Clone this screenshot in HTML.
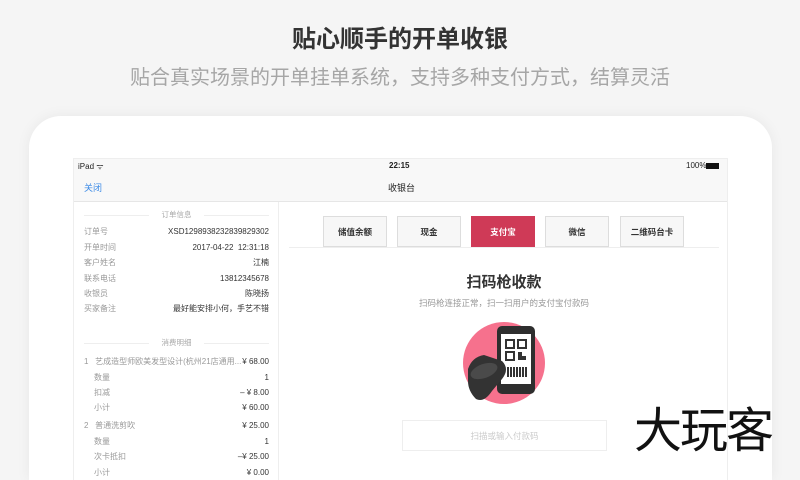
<!DOCTYPE html>
<html><head><meta charset="utf-8"><style>
*{margin:0;padding:0;box-sizing:border-box}
html,body{width:800px;height:480px;overflow:hidden}
body{background:#f5f5f5;font-family:"Liberation Sans","Noto Sans CJK SC",sans-serif;position:relative}
.t1{position:absolute;top:26px;left:0;width:800px;text-align:center;font-size:24px;font-weight:bold;color:#333;line-height:28px}
.t2{position:absolute;top:66px;left:0;width:800px;text-align:center;font-size:20px;color:#a6a6a6;line-height:24px}
.card{position:absolute;left:29px;top:116px;width:743px;height:364px;background:#fff;border-radius:32px 32px 0 0;box-shadow:0 0 14px rgba(0,0,0,0.06)}
.scr{position:absolute;left:73px;top:158px;width:655px;height:322px;background:#fff;border:1px solid #eee;border-bottom:none;overflow:hidden}
.sb{position:absolute;left:0;top:0;width:100%;height:43px;background:#f8f8f8;border-bottom:1px solid #e6e6e6;font-size:8px;color:#222}
.abs{position:absolute}
.left{position:absolute;left:0;top:43px;width:205px;height:300px;border-right:1px solid #eee;font-size:8px;color:#999}
.row{position:absolute;left:10px;width:185px;height:12px;line-height:12px}
.row .v{position:absolute;right:0;top:0;color:#333}
.sec{position:absolute;left:10px;width:185px;text-align:center;font-size:7.5px;color:#aaa;line-height:10px}
.sec:before,.sec:after{content:"";position:absolute;top:5px;width:65px;border-top:1px solid #eee}
.sec:before{left:0}.sec:after{right:0}
.tab{position:absolute;top:57px;width:64px;height:31px;border:1px solid #ddd;background:#f7f7f7;font-size:8.5px;font-weight:bold;color:#333;text-align:center;line-height:30px}
</style></head><body>
<div class="t1">贴心顺手的开单收银</div>
<div class="t2">贴合真实场景的开单挂单系统，支持多种支付方式，结算灵活</div>
<div class="card"></div>
<div class="scr">
 <div class="sb">
  <div class="abs" style="left:4px;top:2px">iPad ᯤ</div>
  <div class="abs" style="left:315px;top:2px;font-weight:bold">22:15</div>
  <div class="abs" style="left:612px;top:2px">100%</div>
  <div class="abs" style="left:632px;top:4px;width:13px;height:6px;background:#111"></div>
  <div class="abs" style="left:10px;top:22px;font-size:9px;color:#3b8ae6">关闭</div>
  <div class="abs" style="left:314px;top:22px;font-size:9px">收银台</div>
 </div>
 <div class="left">
  <div class="sec" style="top:8px">订单信息</div>
  <div class="row" style="top:24px">订单号<span class="v">XSD1298938232839829302</span></div>
  <div class="row" style="top:40px">开单时间<span class="v">2017-04-22&nbsp; 12:31:18</span></div>
  <div class="row" style="top:55px">客户姓名<span class="v">江楠</span></div>
  <div class="row" style="top:71px">联系电话<span class="v">13812345678</span></div>
  <div class="row" style="top:86px">收银员<span class="v">陈晓扬</span></div>
  <div class="row" style="top:101px">买家备注<span class="v">最好能安排小何，手艺不错</span></div>
  <div class="sec" style="top:136px">消费明细</div>
  <div class="row" style="top:154px">1&nbsp;&nbsp; 艺成造型师欧美发型设计(杭州21店通用...<span class="v">¥ 68.00</span></div>
  <div class="row" style="top:170px;padding-left:10px">数量<span class="v">1</span></div>
  <div class="row" style="top:185px;padding-left:10px">扣减<span class="v">– ¥ 8.00</span></div>
  <div class="row" style="top:200px;padding-left:10px">小计<span class="v">¥ 60.00</span></div>
  <div class="row" style="top:218px">2&nbsp;&nbsp; 普通洗剪吹<span class="v">¥ 25.00</span></div>
  <div class="row" style="top:234px;padding-left:10px">数量<span class="v">1</span></div>
  <div class="row" style="top:249px;padding-left:10px">次卡抵扣<span class="v">–¥ 25.00</span></div>
  <div class="row" style="top:265px;padding-left:10px">小计<span class="v">¥ 0.00</span></div>
 </div>
 <div class="tab" style="left:249px">储值余额</div>
 <div class="tab" style="left:323px">现金</div>
 <div class="tab" style="left:397px;background:#cf3a57;border-color:#cf3a57;color:#fff">支付宝</div>
 <div class="tab" style="left:471px">微信</div>
 <div class="tab" style="left:546px">二维码台卡</div>
 <div class="abs" style="left:215px;top:88px;width:430px;border-top:1px solid #eee"></div>
 <div class="abs" style="left:0;width:655px;text-align:center;top:112px;font-size:15px;font-weight:bold;color:#333;padding-left:205px">扫码枪收款</div>
 <div class="abs" style="left:0;width:655px;text-align:center;top:138px;font-size:8.5px;color:#999;padding-left:205px">扫码枪连接正常，扫一扫用户的支付宝付款码</div>
 <svg class="abs" style="left:388px;top:162px" width="84" height="84" viewBox="0 0 84 84">
  <circle cx="42" cy="42" r="41" fill="#f6718d"/>
  <rect x="35" y="5" width="38" height="68" rx="5" fill="#2e2e2e"/>
  <rect x="39" y="13" width="30" height="50" fill="#fff"/>
  <rect x="44" y="19" width="8" height="8" fill="none" stroke="#333" stroke-width="2"/>
  <rect x="56" y="19" width="8" height="8" fill="none" stroke="#333" stroke-width="2"/>
  <rect x="44" y="31" width="8" height="8" fill="none" stroke="#333" stroke-width="2"/>
  <path d="M56 31h4v4h4v4h-8z" fill="#333"/>
  <path d="M46 46v10M49 46v10M52 46v10M55 46v10M58 46v10M61 46v10M64 46v10" stroke="#333" stroke-width="2"/>
  <path d="M6 48 Q10 36 22 34 L40 40 Q48 48 40 58 L30 70 Q22 82 14 78 Q6 70 6 60Z" fill="#333"/>
  <ellipse cx="22" cy="50" rx="14" ry="7" fill="#4a4a4a" transform="rotate(-20 22 50)"/>
 </svg>
 <div class="abs" style="left:328px;top:261px;width:205px;height:31px;border:1px solid #eee;text-align:center;line-height:30px;font-size:8.5px;color:#ccc">扫描或输入付款码</div>
</div>
<div class="abs" style="left:634px;top:404px;font-size:48px;line-height:56px;color:#111;letter-spacing:-2px">大玩客</div>
</body></html>
